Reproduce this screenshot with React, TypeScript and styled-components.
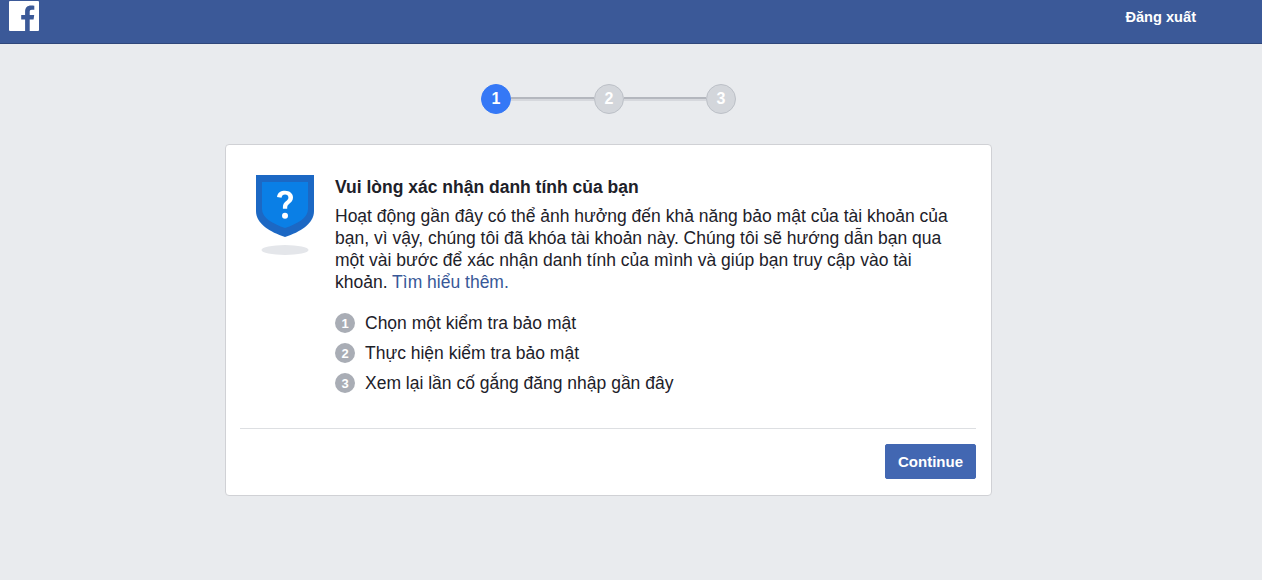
import styled, { createGlobalStyle } from "styled-components";

const GlobalStyle = createGlobalStyle`
  html, body {
    margin: 0;
    padding: 0;
    height: 100%;
    background: #e9ebee;
    font-family: "Liberation Sans", Arial, sans-serif;
    overflow: hidden;
  }
`;

const Header = styled.header`
  height: 44px;
  box-sizing: border-box;
  background: #3b5998;
  border-bottom: 1px solid #2f477a;
  display: flex;
  align-items: flex-start;
  justify-content: space-between;
  padding: 1px 66px 0 9px;
`;

const LogoBox = styled.svg`
  width: 30px;
  height: 30px;
  display: block;
`;

const LogoutLink = styled.a`
  color: #fff;
  font-size: 14.6px;
  font-weight: 700;
  line-height: 16px;
  margin-top: 8px;
  text-decoration: none;
`;

const Main = styled.main`
  width: 1217px;
  display: flex;
  flex-direction: column;
  align-items: center;
  padding-top: 40px;
`;

const Stepper = styled.div`
  display: flex;
  align-items: center;
  margin-bottom: 30px;
`;

const StepDot = styled.div<{ $active?: boolean }>`
  width: 30px;
  height: 30px;
  box-sizing: border-box;
  border-radius: 50%;
  background: ${({ $active }) => ($active ? "#3578f6" : "#d3d6db")};
  border: 1px solid ${({ $active }) => ($active ? "#3578f6" : "#bcc0c7")};
  color: #fff;
  font-size: 16px;
  font-weight: 700;
  display: flex;
  align-items: center;
  justify-content: center;
`;

const StepLine = styled.div<{ $width: number }>`
  width: ${({ $width }) => $width}px;
  height: 4px;
  background: linear-gradient(#b4b7be 0 2px, #d6d8dd 2px 4px);
`;

const Card = styled.section`
  width: 767px;
  height: 352px;
  box-sizing: border-box;
  background: #fff;
  border: 1px solid #d0d1d5;
  border-radius: 4px;
  padding: 30px 15px 16px 14px;
  display: flex;
  flex-direction: column;
`;

const CardBody = styled.div`
  display: flex;
  flex: 1;
`;

const ShieldIcon = styled.svg`
  width: 60px;
  height: 80px;
  margin: 0 0 0 15px;
  flex-shrink: 0;
  display: block;
`;

const Content = styled.div`
  margin-left: 20px;
  width: 625px;
  color: #1d2129;
`;

const Title = styled.h2`
  margin: 0 0 6px;
  font-size: 17.5px;
  font-weight: 700;
  line-height: 24px;
`;

const Paragraph = styled.p`
  margin: 0 0 15px;
  font-size: 17.5px;
  line-height: 22px;
`;

const LearnMore = styled.a`
  color: #385898;
  text-decoration: none;
`;

const StepList = styled.ol`
  list-style: none;
  margin: 0;
  padding: 0;
`;

const StepItem = styled.li`
  display: flex;
  align-items: center;
  height: 30px;
  font-size: 17.5px;
`;

const StepNumber = styled.span`
  width: 20px;
  height: 20px;
  border-radius: 50%;
  background: #a9adb5;
  color: #fff;
  font-size: 13px;
  font-weight: 700;
  display: flex;
  align-items: center;
  justify-content: center;
  margin-right: 10px;
`;

const Footer = styled.footer`
  border-top: 1px solid #dddfe2;
  padding-top: 15px;
  display: flex;
  justify-content: flex-end;
`;

const ContinueButton = styled.button`
  width: 91px;
  height: 35px;
  background: #4267b2;
  border: 1px solid #4267b2;
  border-radius: 2px;
  color: #fff;
  font-family: inherit;
  font-size: 15px;
  font-weight: 700;
  padding: 0;
`;

const steps = [
  "Chọn một kiểm tra bảo mật",
  "Thực hiện kiểm tra bảo mật",
  "Xem lại lần cố gắng đăng nhập gần đây",
];

export default function App() {
  return (
    <>
      <GlobalStyle />
      <Header>
        <LogoBox viewBox="0 0 30 30">
          <rect width="30" height="30" rx="1" fill="#fff" />
          <path
            d="M20.7 30V18.4h3.9l.6-4.5h-4.5V11c0-1.3.4-2.2 2.2-2.2h2.4v-4c-.4-.1-1.8-.2-3.4-.2-3.4 0-5.8 2.1-5.8 5.9v3.4h-3.9v4.5h3.9V30z"
            fill="#3b5998"
          />
        </LogoBox>
        <LogoutLink href="#">Đăng xuất</LogoutLink>
      </Header>
      <Main>
        <Stepper>
          <StepDot $active>1</StepDot>
          <StepLine $width={83} />
          <StepDot>2</StepDot>
          <StepLine $width={82} />
          <StepDot>3</StepDot>
        </Stepper>
        <Card>
          <CardBody>
            <ShieldIcon viewBox="0 0 60 80">
              <ellipse cx="30" cy="75" rx="23.500" ry="5" fill="#e4e6ea" />
              <path
                d="M1 0h58v36c0 13-14 21-29 26C15 57 1 49 1 36z"
                fill="#1c68c4"
              />
              <path
                d="M7 7h46v27c0 9-11 15-23 19C18 49 7 43 7 34z"
                fill="#0a7fe6"
              />
              <path
                d="M22 22c.5-4.500 3.700-6.300 8-6.300 4.800 0 8 2.800 8 6.800 0 3.100-1.800 4.700-3.700 6.200-1.600 1.300-2.100 2.100-2.100 4.300v.8h-4.300v-1.500c0-3 1-4.400 3-6 1.500-1.200 2.500-2.100 2.500-3.800 0-1.900-1.300-3-3.300-3-2.100 0-3.300 1.200-3.600 3.300z"
                fill="#fff"
              />
              <circle cx="30" cy="40.800" r="3" fill="#fff" />
            </ShieldIcon>
            <Content>
              <Title>Vui lòng xác nhận danh tính của bạn</Title>
              <Paragraph>
                Hoạt động gần đây có thể ảnh hưởng đến khả năng bảo mật của tài khoản của
                <br />
                bạn, vì vậy, chúng tôi đã khóa tài khoản này. Chúng tôi sẽ hướng dẫn bạn qua
                <br />
                một vài bước để xác nhận danh tính của mình và giúp bạn truy cập vào tài
                <br />
                khoản. <LearnMore href="#">Tìm hiểu thêm.</LearnMore>
              </Paragraph>
              <StepList>
                {steps.map((step, i) => (
                  <StepItem key={step}>
                    <StepNumber>{i + 1}</StepNumber>
                    {step}
                  </StepItem>
                ))}
              </StepList>
            </Content>
          </CardBody>
          <Footer>
            <ContinueButton>Continue</ContinueButton>
          </Footer>
        </Card>
      </Main>
    </>
  );
}
